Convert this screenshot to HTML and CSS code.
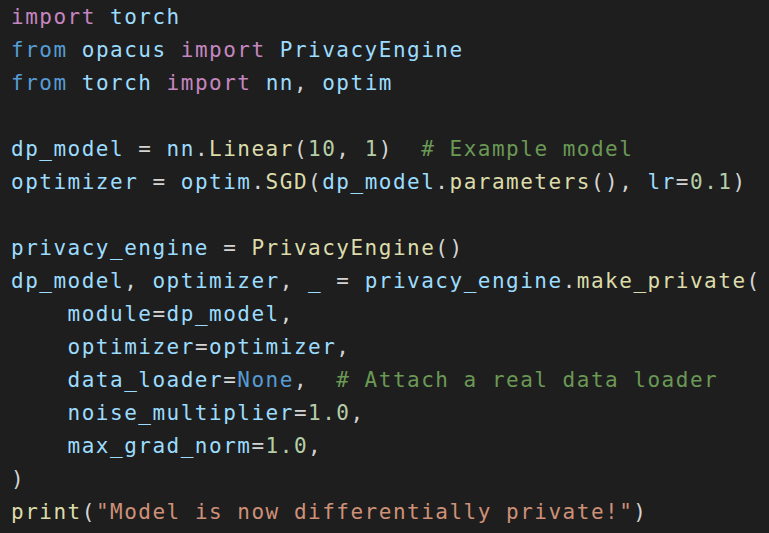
FILE: index.html
```html
<!DOCTYPE html>
<html>
<head>
<meta charset="utf-8">
<link rel="stylesheet" href="styles.css">
</head>
<body>
<pre class="code"><span class="kw">import</span> <span class="v">torch</span>
<span class="kb">from</span> <span class="v">opacus</span> <span class="kw">import</span> <span class="v">PrivacyEngine</span>
<span class="kb">from</span> <span class="v">torch</span> <span class="kw">import</span> <span class="v">nn</span>, <span class="v">optim</span>

<span class="v">dp_model</span> = <span class="v">nn</span>.<span class="fn">Linear</span>(<span class="num">10</span>, <span class="num">1</span>)  <span class="cm"># Example model</span>
<span class="v">optimizer</span> = <span class="v">optim</span>.<span class="fn">SGD</span>(<span class="v">dp_model</span>.<span class="fn">parameters</span>(), <span class="v">lr</span>=<span class="num">0.1</span>)

<span class="v">privacy_engine</span> = <span class="fn">PrivacyEngine</span>()
<span class="v">dp_model</span>, <span class="v">optimizer</span>, <span class="v">_</span> = <span class="v">privacy_engine</span>.<span class="fn">make_private</span>(
    <span class="v">module</span>=<span class="v">dp_model</span>,
    <span class="v">optimizer</span>=<span class="v">optimizer</span>,
    <span class="v">data_loader</span>=<span class="kb">None</span>,  <span class="cm"># Attach a real data loader</span>
    <span class="v">noise_multiplier</span>=<span class="num">1.0</span>,
    <span class="v">max_grad_norm</span>=<span class="num">1.0</span>,
)
<span class="fn">print</span>(<span class="str">"Model is now differentially private!"</span>)</pre>
</body>
</html>
```
FILE: styles.css
```css
html, body {
  margin: 0;
  padding: 0;
  background: #1e1e1e;
}
body {
  width: 769px;
  height: 533px;
  overflow: hidden;
}
.code {
  margin: 0;
  padding: 1px 0 0 11px;
  font-family: "DejaVu Sans Mono", "Liberation Mono", monospace;
  font-size: 21px;
  letter-spacing: 1.5px;
  line-height: 33px;
  color: #d4d4d4;
  white-space: pre;
}
.kw { color: #c586c0; }
.kb { color: #569cd6; }
.v { color: #9cdcfe; }
.fn { color: #dcdcaa; }
.num { color: #b5cea8; }
.cm { color: #6a9955; }
.str { color: #ce9178; }
```
